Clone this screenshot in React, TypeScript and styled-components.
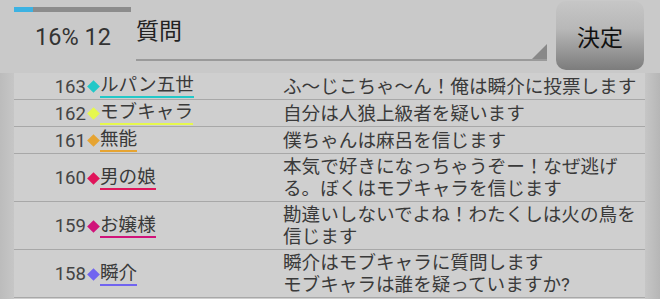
import React from 'react';
import styled, {createGlobalStyle} from 'styled-components';

interface Post {
    no: number;
    name: string;
    color: string;
    text: string;
}

const posts: Post[] = [
    {no: 163, name: 'ルパン五世', color: '#22c8c8', text: 'ふ〜じこちゃ〜ん！俺は瞬介に投票します'},
    {no: 162, name: 'モブキャラ', color: '#e6f84e', text: '自分は人狼上級者を疑います'},
    {no: 161, name: '無能', color: '#e6a432', text: '僕ちゃんは麻呂を信じます'},
    {no: 160, name: '男の娘', color: '#e0145a', text: '本気で好きになっちゃうぞー！なぜ逃げる。ぼくはモブキャラを信じます'},
    {no: 159, name: 'お嬢様', color: '#d0137a', text: '勘違いしないでよね！わたくしは火の鳥を信じます'},
    {no: 158, name: '瞬介', color: '#7064f0', text: '瞬介はモブキャラに質問します\nモブキャラは誰を疑っていますか?'},
];

const GlobalStyle = createGlobalStyle`
    html, body {
        margin: 0;
        padding: 0;
        background: #c9c9c9;
    }
    body {
        font-family: Roboto, "Noto Sans CJK JP", sans-serif;
    }
`

const App: React.FC = () => {
    const progress = 16;

    return (
        <Screen>
            <GlobalStyle/>
            <Header>
                <StatusBox>
                    <Progress>
                        <ProgressFill style={{width: progress + '%'}}/>
                    </Progress>
                    <StatusText>{progress}% 12</StatusText>
                </StatusBox>
                <Spinner>
                    <SpinnerText>質問</SpinnerText>
                    <SpinnerArrow/>
                </Spinner>
                <DecideButton>決定</DecideButton>
            </Header>
            <Body>
                <EdgeLeft/>
                <List>
                    {posts.map(p => (
                        <Row key={p.no}>
                            <No>{p.no}</No>
                            <Diamond color={p.color}/>
                            <NameCell>
                                <Name color={p.color}>{p.name}</Name>
                            </NameCell>
                            <Message>{p.text}</Message>
                        </Row>
                    ))}
                </List>
                <EdgeRight/>
            </Body>
        </Screen>
    );
}

export default App;

const Screen = styled.div`
    width: 660px;
    height: 299px;
    overflow: hidden;
    background: #c9c9c9;
    color: #3c3c3c;
`

const Header = styled.div`
    height: 73px;
    display: flex;
    align-items: flex-start;
`

const StatusBox = styled.div`
    width: 122px;
    margin-left: 14px;
    display: flex;
    flex-direction: column;
`

const Progress = styled.div`
    margin-top: 7px;
    width: 117px;
    height: 5px;
    background: #8c8c8c;
`

const ProgressFill = styled.div`
    height: 100%;
    background: #3cb2e2;
`

const StatusText = styled.div`
    margin-top: 11px;
    margin-left: 21px;
    font-size: 23.5px;
    line-height: 28px;
    color: #333;
`

const Spinner = styled.div`
    position: relative;
    width: 411px;
    height: 61px;
    border-bottom: 2px solid #9a9a9a;
    box-sizing: border-box;
`

const SpinnerText = styled.div`
    margin-top: 18px;
    font-size: 23px;
    line-height: 28px;
    color: #222;
`

const SpinnerArrow = styled.div`
    position: absolute;
    right: 0;
    bottom: 0;
    width: 0;
    height: 0;
    border-left: 15px solid transparent;
    border-bottom: 15px solid #888;
`

const DecideButton = styled.button`
    margin: 1px 0 0 9px;
    width: 88px;
    height: 69px;
    border: none;
    border-radius: 10px;
    padding: 0;
    background: linear-gradient(#c6c6c6 0%, #b8b8b8 40%, #7c7c7c 100%);
    font-family: Roboto, "Noto Sans CJK JP", sans-serif;
    font-size: 23px;
    color: #111;
`

const Body = styled.div`
    display: flex;
    height: 226px;
`

const EdgeLeft = styled.div`
    width: 14px;
    background: linear-gradient(to right, #bcbcbc, #c6c6c6);
`

const EdgeRight = styled.div`
    width: 15px;
    background: linear-gradient(to right, #c6c6c6, #b6b6b6);
`

const List = styled.div`
    flex: 1;
    background: #cfcfcf;
`

const Row = styled.div`
    display: grid;
    grid-template-columns: 72px 14px 183px 1fr;
    align-items: center;
    padding: 2px 0 1px;
    border-bottom: 1px solid #a8a8a8;
    font-size: 18.6px;
    line-height: 22px;
`

const No = styled.div`
    text-align: right;
    color: #444;
`

const Diamond = styled.div<{color: string}>`
    justify-self: center;
    width: 9px;
    height: 9px;
    background: ${p => p.color};
    transform: rotate(45deg);
`

const NameCell = styled.div`
    display: flex;
`

const Name = styled.span<{color: string}>`
    color: #3a3a3a;
    border-bottom: 2px solid ${p => p.color};
    line-height: 21px;
`

const Message = styled.div`
    white-space: pre-line;
    color: #3a3a3a;
    padding-right: 6px;
`
